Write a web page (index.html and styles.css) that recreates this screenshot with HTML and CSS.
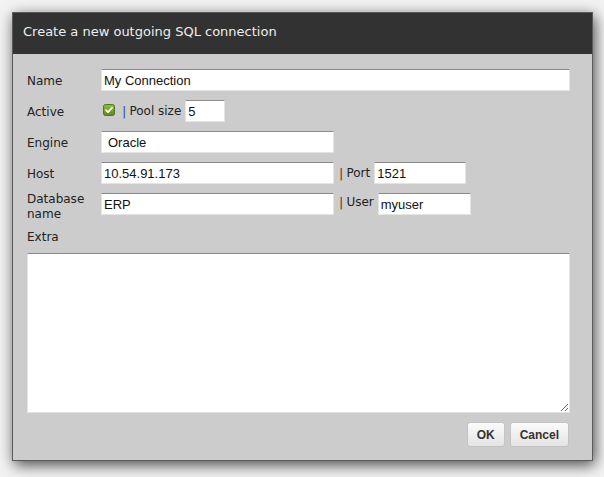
FILE: index.html
```html
<!DOCTYPE html>
<html>
<head>
<meta charset="utf-8">
<link rel="stylesheet" href="styles.css">
</head>
<body>
<div class="dialog">
  <div class="titlebar">Create a new outgoing SQL connection</div>
  <form class="body">
    <div class="row">
      <label class="lbl">Name</label>
      <input class="field f-wide" value="My Connection">
    </div>
    <div class="row">
      <label class="lbl">Active</label>
      <span class="check"><svg width="12" height="12" viewBox="0 0 12 12"><defs><linearGradient id="g" x1="0" y1="0" x2="0" y2="1"><stop offset="0" stop-color="#8fbf3a"/><stop offset="1" stop-color="#5a8a1c"/></linearGradient></defs><rect x="0.5" y="0.5" width="11" height="11" rx="2" fill="url(#g)" stroke="#4d7a17"/><path d="M3 6.2 L5 8.2 L9 3.8" fill="none" stroke="#fff" stroke-width="1.8" stroke-linecap="round" stroke-linejoin="round"/></svg></span>
      <span class="pipe blue">|</span><span class="sub">Pool size</span>
      <input class="field f-pool" value="5">
    </div>
    <div class="row">
      <label class="lbl">Engine</label>
      <div class="field f-mid select">Oracle</div>
    </div>
    <div class="row">
      <label class="lbl">Host</label>
      <input class="field f-mid" value="10.54.91.173">
      <span class="pipe brown">|</span><span class="sub">Port</span>
      <input class="field f-port" value="1521">
    </div>
    <div class="row row-top">
      <label class="lbl two">Database name</label>
      <input class="field f-mid" value="ERP">
      <span class="pipe brown">|</span><span class="sub">User</span>
      <input class="field f-user" value="myuser">
    </div>
    <label class="lbl extra">Extra</label>
    <textarea class="area"></textarea>
    <div class="buttons">
      <button type="button" class="btn">OK</button>
      <button type="button" class="btn">Cancel</button>
    </div>
  </form>
</div>
</body>
</html>
```
FILE: styles.css
```css
html, body {
  margin: 0;
  padding: 0;
  background: #f3f3f3;
}
body {
  min-height: 477px;
  box-sizing: border-box;
  padding: 12px 0 0 12px;
  font-family: "DejaVu Sans", sans-serif;
}
.dialog {
  width: 579px;
  border: 1px solid #5a5a5a;
  background: #cccccc;
  box-shadow: 2px 4px 14px rgba(0, 0, 0, 0.7);
}
.titlebar {
  height: 37px;
  line-height: 37px;
  padding: 0 0 4px 10px;
  background: #323232;
  color: #eeeeee;
  font-size: 13px;
}
.body {
  margin: 0;
  padding: 15px 22px 13px 14px;
}
.row {
  display: flex;
  align-items: center;
  height: 22px;
  margin-bottom: 9px;
}
.row > .lbl {
  margin-top: 2px;
}
.row-top {
  align-items: flex-start;
  height: 22px;
}
.lbl {
  display: block;
  width: 74px;
  flex: none;
  font-size: 12px;
  line-height: 15px;
  color: #222;
}
.row > .lbl.two {
  margin-top: -1px;
}
.field {
  box-sizing: border-box;
  height: 22px;
  margin: 0;
  padding: 0 2px;
  border: 1px solid #e4e4e4;
  border-top-color: #8a8a8a;
  background: #fff;
  font-family: "Liberation Sans", Arial, sans-serif;
  font-size: 13px;
  color: #111;
  outline: none;
}
.f-wide { width: 469px; }
.f-mid { width: 233px; }
.f-pool { width: 40px; }
.f-port { width: 92px; }
.f-user { width: 93px; }
.select {
  display: flex;
  align-items: center;
  padding-left: 6px;
}
.check {
  display: inline-flex;
  margin-left: 2px;
  margin-top: -3px;
}
.pipe {
  font-size: 13px;
  margin-left: 5px;
  margin-right: 3px;
}
.check + .pipe { margin-left: 7px; }
.blue { color: #2456a8; }
.brown { color: #7a3410; }
.sub {
  font-size: 12px;
  color: #222;
  margin-right: 4px;
}
.row-top .pipe, .row-top .sub {
  margin-top: 2px;
}
.extra {
  margin-top: 15px;
  width: auto;
}
.area {
  display: block;
  box-sizing: border-box;
  width: 543px;
  height: 160px;
  margin: 8px 0 0 0;
  padding: 2px;
  border: 1px solid #e4e4e4;
  border-top-color: #8a8a8a;
  background: #fff;
  resize: both;
  outline: none;
}
.buttons {
  display: flex;
  justify-content: flex-end;
  gap: 5px;
  margin-top: 9px;
  padding-right: 1px;
}
.btn {
  height: 25px;
  margin: 0;
  padding: 0 9px;
  border: 1px solid #c4c4c4;
  border-radius: 3px;
  background: linear-gradient(#fbfbfb, #e4e4e4);
  font-family: "Liberation Sans", Arial, sans-serif;
  font-weight: bold;
  font-size: 12px;
  color: #333;
}
```
